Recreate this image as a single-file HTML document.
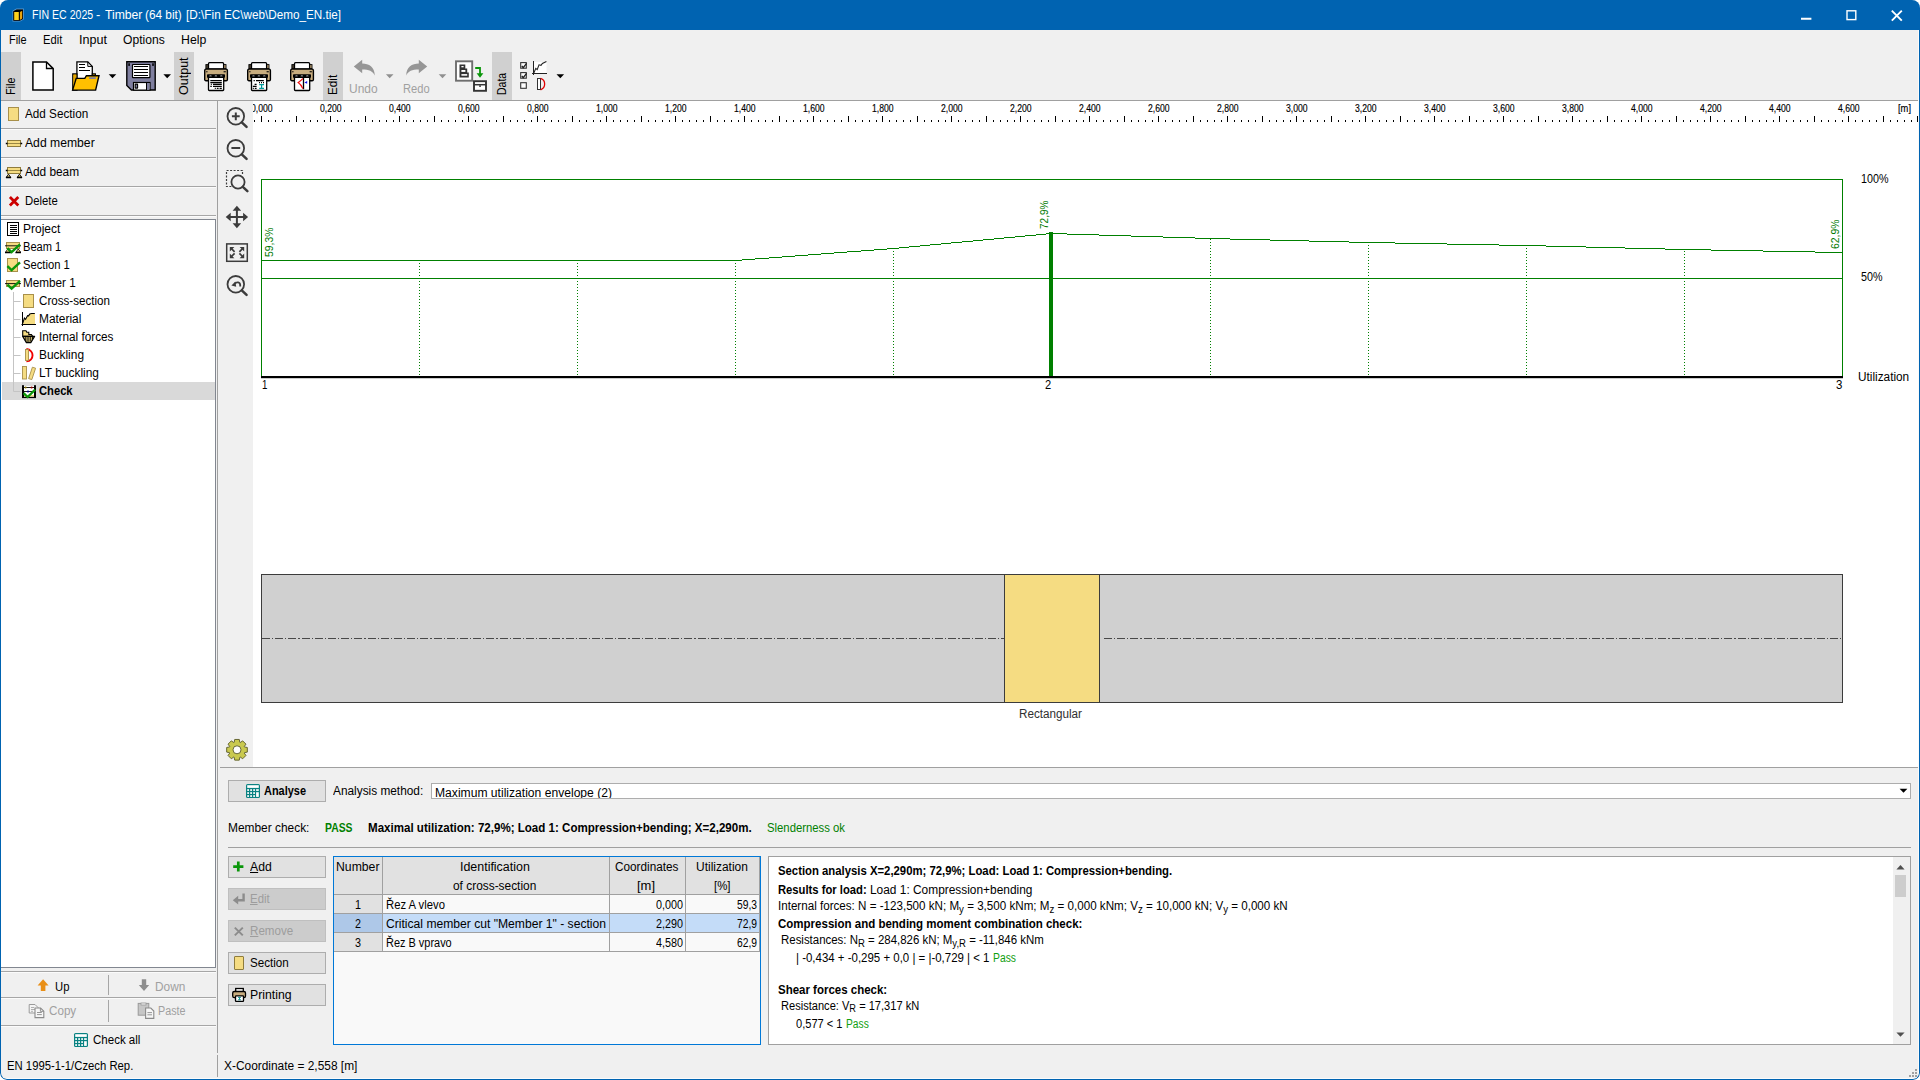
<!DOCTYPE html>
<html><head><meta charset="utf-8"><title>FIN EC 2025 - Timber</title>
<style>
html,body{margin:0;padding:0;background:#fff;}
body{width:1920px;height:1080px;overflow:hidden;font-family:"Liberation Sans",sans-serif;font-size:12px;}
#app{position:relative;width:1920px;height:1080px;overflow:hidden;background:#f0f0f0;border-radius:8px 8px 7px 7px;}
.t{position:absolute;white-space:nowrap;transform-origin:0 50%;display:inline-block;}
.b{position:absolute;box-sizing:border-box;}
svg{position:absolute;left:0;top:0;overflow:visible;}
.btn{position:absolute;box-sizing:border-box;background:#e1e1e1;border:1px solid #adadad;}
sub.s{font-size:10px;vertical-align:baseline;position:relative;top:2.6px;line-height:0;}

</style></head><body>
<div id="app">
<!-- p_head -->
<div class="b" style="left:0;top:0;width:1920px;height:30px;background:#0063b1;"></div><div class="b" style="left:0;top:30px;width:1920px;height:1050px;border:1px solid #0063b1;border-top:none;border-radius:0 0 7px 7px;z-index:50;"></div><div class="b" style="left:1918px;top:30px;width:1px;height:1044px;background:#fbfbfb;z-index:49;"></div><div class="b" style="left:6px;top:1078px;width:1908px;height:1px;background:#fbfbfb;z-index:49;"></div><span class="t" style="left:31.50px;top:7.33px;font-size:12px;line-height:16.00px;color:#fff;transform:scaleX(0.8822);">FIN EC 2025</span><span class="t" style="left:96.30px;top:7.33px;font-size:12px;line-height:16.00px;color:#fff;transform:scaleX(1.0750);">-</span><span class="t" style="left:104.50px;top:7.33px;font-size:12px;line-height:16.00px;color:#fff;transform:scaleX(1.0138);">Timber</span><span class="t" style="left:145.30px;top:7.33px;font-size:12px;line-height:16.00px;color:#fff;transform:scaleX(0.9850);">(64 bit)</span><span class="t" style="left:185.70px;top:7.33px;font-size:12px;line-height:16.00px;color:#fff;transform:scaleX(0.9818);">[D:\Fin</span><span class="t" style="left:224.30px;top:7.33px;font-size:12px;line-height:16.00px;color:#fff;transform:scaleX(0.9746);">EC\web\Demo_EN.tie]</span><span class="t" style="left:9.40px;top:31.83px;font-size:12px;line-height:16.00px;color:#000;transform:scaleX(0.9099);">File</span><span class="t" style="left:43.30px;top:31.83px;font-size:12px;line-height:16.00px;color:#000;transform:scaleX(0.9329);">Edit</span><span class="t" style="left:79.00px;top:31.83px;font-size:12px;line-height:16.00px;color:#000;transform:scaleX(1.0486);">Input</span><span class="t" style="left:123.30px;top:31.83px;font-size:12px;line-height:16.00px;color:#000;transform:scaleX(1.0082);">Options</span><span class="t" style="left:181.00px;top:31.83px;font-size:12px;line-height:16.00px;color:#000;transform:scaleX(1.0248);">Help</span><div class="b" style="left:1px;top:52px;width:20px;height:48px;background:#d0d0d0;"></div><div class="b" style="left:14.7px;top:95.2px;width:0;height:0;transform-origin:0 0;transform:rotate(-90deg);"><span class="t" style="left:0.00px;top:-11.97px;font-size:12px;line-height:16.00px;color:#000;transform:scaleX(0.8995);">File</span></div><div class="b" style="left:174px;top:52px;width:20px;height:48px;background:#d0d0d0;"></div><div class="b" style="left:187.7px;top:95.2px;width:0;height:0;transform-origin:0 0;transform:rotate(-90deg);"><span class="t" style="left:0.00px;top:-11.97px;font-size:12px;line-height:16.00px;color:#000;transform:scaleX(1.0435);">Output</span></div><div class="b" style="left:323px;top:52px;width:20px;height:48px;background:#d0d0d0;"></div><div class="b" style="left:336.7px;top:95.2px;width:0;height:0;transform-origin:0 0;transform:rotate(-90deg);"><span class="t" style="left:0.00px;top:-11.97px;font-size:12px;line-height:16.00px;color:#000;transform:scaleX(0.9764);">Edit</span></div><div class="b" style="left:492px;top:52px;width:20px;height:48px;background:#d0d0d0;"></div><div class="b" style="left:505.7px;top:95.2px;width:0;height:0;transform-origin:0 0;transform:rotate(-90deg);"><span class="t" style="left:0.00px;top:-11.97px;font-size:12px;line-height:16.00px;color:#000;transform:scaleX(0.8754);">Data</span></div><div class="b" style="left:1px;top:100px;width:1917px;height:1px;background:#a0a0a0;"></div><svg width="1920" height="110" viewBox="0 0 1920 110"><g><path d="M13.3,11.2 L16.6,9.4 H23 V19 L19.8,20.8 H13.3Z" fill="#000" stroke="#9fc4e8" stroke-opacity=".55" stroke-width="1.6"/><path d="M13.3,11.2 L16.6,9.4 H23 V19 L19.8,20.8 H13.3Z" fill="#000"/><rect x="14.2" y="12" width="4.6" height="8" fill="#ffd21c"/><path d="M19.9,12 L22.2,10.8 V18.6 L19.9,19.9Z" fill="#e9a30e"/></g><path d="M1801,18.8 H1811.4" stroke="#fff" stroke-width="2"/><rect x="1847" y="10.8" width="8.8" height="8.8" fill="none" stroke="#fff" stroke-width="1.4"/><path d="M1891.8,10.6 L1901.8,20.6 M1901.8,10.6 L1891.8,20.6" stroke="#fff" stroke-width="1.9"/><path d="M32.9,61.9 H46.5 L53.2,68.6 V90.1 H32.9Z" fill="#fff" stroke="#000" stroke-width="1.5" stroke-linejoin="miter"/><path d="M46.5,62 V68.5 H53" fill="none" stroke="#000" stroke-width="1.3"/><path d="M76.9,61.8 H87.8 L92.3,66.4 V80 H76.9Z" fill="#fff" stroke="#000" stroke-width="1.3"/><path d="M87.8,61.8 V66.4 H92.3" fill="none" stroke="#000" stroke-width="1"/><path d="M79,64.5 H85 M79,67.5 H85 M79,70.5 H90" stroke="#000" stroke-width="1.1" shape-rendering="crispEdges"/><path d="M72.8,74 H76.9 V90 H72.8Z" fill="#ffc000" stroke="#000" stroke-width="1.3"/><path d="M73.4,89.4 L76.3,79 V74.6 H73.4Z" fill="#e2a400"/><path d="M92.3,73.9 H95.4 V76 H92.3Z" fill="#ffc000" stroke="#000" stroke-width="1.1"/><path d="M72.6,90.1 L76.2,78.4 H84.8 L86.4,75.7 H99 L95.6,90.1Z" fill="#ffc000" stroke="#000" stroke-width="1.4" stroke-linejoin="miter"/><rect x="89.2" y="77.2" width="6.6" height="1.8" fill="#7f7f9f"/><path d="M108.7,74.2 H116.3 L112.5,78.3Z" fill="#000"/><path d="M163.39999999999998,74.2 H171.0 L167.2,78.3Z" fill="#000"/><path d="M385.9,74.2 H393.5 L389.7,78.3Z" fill="#909090"/><path d="M438.7,74.2 H446.3 L442.5,78.3Z" fill="#909090"/><path d="M556.5,74.2 H564.0999999999999 L560.3,78.3Z" fill="#000"/><path d="M126.8,61.8 H155.2 V90 H131.4 L126.8,85.5Z" fill="#7f7f9f" stroke="#000" stroke-width="1.4" stroke-linejoin="miter"/><rect x="132.5" y="64.5" width="17.4" height="13.2" rx="0.6" fill="#fff" stroke="#000" stroke-width="1.2"/><path d="M134,66.5 H148 M134,69.5 H148 M134,72.5 H148 M134,75.5 H148" stroke="#000" stroke-width="1" shape-rendering="crispEdges"/><rect x="128.3" y="63.3" width="1.6" height="2.6" fill="#000"/><rect x="152.2" y="63.3" width="1.6" height="2.6" fill="#000"/><rect x="133.5" y="82.5" width="16.5" height="7.6" fill="#fff" stroke="#000" stroke-width="1.2"/><rect x="147" y="83" width="2.5" height="6.6" fill="#7f7f9f"/><path d="M146.5,82.5 V90" stroke="#000" stroke-width="1"/><rect x="135.2" y="84.1" width="2.4" height="4" rx="0.3" fill="#7f7f9f" stroke="#000" stroke-width="1.1"/><g transform="translate(204,62)"><rect x="1.9" y="2.6" width="2.6" height="4" fill="#4a4030" stroke="#000" stroke-width="0.9"/><rect x="19.6" y="2.6" width="2.4" height="4" fill="#c8ad7f" stroke="#000" stroke-width="0.9"/><rect x="4.5" y="0.7" width="15.1" height="6.2" rx="1" fill="#fff" stroke="#000" stroke-width="1.3"/><rect x="0.7" y="7.1" width="22.7" height="11.6" rx="1.3" fill="#c8ad7f" stroke="#000" stroke-width="1.4"/><rect x="2.2" y="9.2" width="1.3" height="1.1" fill="#000"/><rect x="19.6" y="9.2" width="2.2" height="1.1" fill="#000"/><rect x="3" y="12.3" width="18" height="3.6" rx="0.8" fill="#000"/><path d="M5.2,14.6 a1.3,1.3 0 0 1 2.6,0 M10.6,14.6 a1.3,1.3 0 0 1 2.6,0 M16,14.6 a1.3,1.3 0 0 1 2.6,0" fill="#aaa"/><rect x="4.5" y="15.3" width="15.2" height="13.2" rx="0.8" fill="#fff" stroke="#000" stroke-width="1.3"/><path d="M6.3,18.5 H17.8 M6.3,20.5 H17.8 M6.8,22.4 H7.8 M9,22.4 H17.8 M6.3,24.4 H7.8 M9,24.4 H17.8 M10.8,26.4 H11.8 M12.8,26.4 H14.6 M15.6,26.4 H17.8" stroke="#000" stroke-width="1.25" fill="none"/></g><g transform="translate(247,62)"><rect x="1.9" y="2.6" width="2.6" height="4" fill="#4a4030" stroke="#000" stroke-width="0.9"/><rect x="19.6" y="2.6" width="2.4" height="4" fill="#c8ad7f" stroke="#000" stroke-width="0.9"/><rect x="4.5" y="0.7" width="15.1" height="6.2" rx="1" fill="#fff" stroke="#000" stroke-width="1.3"/><rect x="0.7" y="7.1" width="22.7" height="11.6" rx="1.3" fill="#c8ad7f" stroke="#000" stroke-width="1.4"/><rect x="2.2" y="9.2" width="1.3" height="1.1" fill="#000"/><rect x="19.6" y="9.2" width="2.2" height="1.1" fill="#000"/><rect x="3" y="12.3" width="18" height="3.6" rx="0.8" fill="#000"/><path d="M5.2,14.6 a1.3,1.3 0 0 1 2.6,0 M10.6,14.6 a1.3,1.3 0 0 1 2.6,0 M16,14.6 a1.3,1.3 0 0 1 2.6,0" fill="#aaa"/><rect x="4.5" y="15.3" width="15.2" height="13.2" rx="0.8" fill="#fff" stroke="#000" stroke-width="1.3"/><path d="M6.6,18.5 H7.8 M9,18.5 H16.8 M12,20.5 H13 M14,20.5 H15 M16,20.5 H17 M7.6,22.4 H9.6 M5.8,24.4 H9.6 M5.8,26.4 H6.8 M7.8,26.4 H9.6" stroke="#000" stroke-width="1.25" fill="none"/><path d="M12.2,22.7 H17 M14.6,22.7 V26.4 M12.2,26.4 H17" stroke="#009a9a" stroke-width="1.2" fill="none"/></g><g transform="translate(290,62)"><rect x="1.9" y="2.6" width="2.6" height="4" fill="#4a4030" stroke="#000" stroke-width="0.9"/><rect x="19.6" y="2.6" width="2.4" height="4" fill="#c8ad7f" stroke="#000" stroke-width="0.9"/><rect x="4.5" y="0.7" width="15.1" height="6.2" rx="1" fill="#fff" stroke="#000" stroke-width="1.3"/><rect x="0.7" y="7.1" width="22.7" height="11.6" rx="1.3" fill="#c8ad7f" stroke="#000" stroke-width="1.4"/><rect x="2.2" y="9.2" width="1.3" height="1.1" fill="#000"/><rect x="19.6" y="9.2" width="2.2" height="1.1" fill="#000"/><rect x="3" y="12.3" width="18" height="3.6" rx="0.8" fill="#000"/><path d="M5.2,14.6 a1.3,1.3 0 0 1 2.6,0 M10.6,14.6 a1.3,1.3 0 0 1 2.6,0 M16,14.6 a1.3,1.3 0 0 1 2.6,0" fill="#aaa"/><rect x="4.5" y="15.3" width="15.2" height="13.2" rx="0.8" fill="#fff" stroke="#000" stroke-width="1.3"/><path d="M13.5,16 V27.2" stroke="#000" stroke-width="1.3"/><path d="M12.8,16.6 C12,18.2 10,19.2 8.2,20.4 C10,21.6 11.6,23.2 12.8,26.6" stroke="#f01010" stroke-width="1.2" fill="none"/><path d="M14.4,20.4 L17.2,19 V21.8Z" fill="#1010f0"/></g><path d="M353.8,66.5 L362.2,59.8 V63.6 C369,63.6 374.6,67 374.8,75.6 C372.8,71.2 369,69.6 362.2,69.6 V73.2Z" fill="#969696"/><path d="M427.2,66.5 L418.8,59.8 V63.6 C412,63.6 406.4,67 406.2,75.6 C408.2,71.2 412,69.6 418.8,69.6 V73.2Z" fill="#969696"/><rect x="456" y="61.3" width="16.2" height="19.4" fill="#fff" stroke="#6e6e6e" stroke-width="1.9"/><path d="M459.5,64.4 H465.3 V68.4 H467.2 V72.4 H468.8 V77.6 H459.5Z" fill="#333"/><rect x="461.4" y="66" width="2.2" height="1.3" fill="#fff"/><rect x="461.4" y="70" width="4" height="1.9" fill="#fff"/><rect x="461.4" y="74.1" width="5.8" height="1.6" fill="#fff"/><path d="M475.2,68 H480 V75" fill="none" stroke="#0a960a" stroke-width="1.8"/><path d="M476.6,73.2 H483.4 L480,77.8Z" fill="#0a960a"/><rect x="474" y="81.2" width="12" height="9.6" fill="#fff" stroke="#333" stroke-width="1.9"/><path d="M474,84.7 H486" stroke="#333" stroke-width="1.5"/><rect x="479.2" y="85.3" width="1.7" height="1.6" fill="#333"/><rect x="520.7" y="62.6" width="5.6" height="5.6" fill="#fff" stroke="#333" stroke-width="1.1"/><path d="M521.8,66.0 L523.2,67.6 L526.6,63.4" stroke="#222" stroke-width="1.35" fill="none"/><rect x="520.7" y="72.6" width="5.6" height="5.6" fill="#fff" stroke="#333" stroke-width="1.1"/><path d="M521.8,76.0 L523.2,77.6 L526.6,73.39999999999999" stroke="#222" stroke-width="1.35" fill="none"/><rect x="520.7" y="82.7" width="5.6" height="5.6" fill="#fff" stroke="#333" stroke-width="1.1"/><rect x="534" y="62" width="12.5" height="11" fill="#fff"/><path d="M533.5,60.6 V75 M532,73.5 H547" stroke="#222" stroke-width="1" fill="none" shape-rendering="crispEdges"/><path d="M533.5,73.8 L535.8,68.4 L537.2,69.6 L539,64.8 L541,65.4 L542.4,63.4 L546.4,61.6" stroke="#222" stroke-width="1.1" fill="none"/><rect x="537.5" y="78.5" width="3" height="11" fill="#fff" stroke="#333" stroke-width="1" shape-rendering="crispEdges"/><path d="M540.6,78.4 C546,80.2 546,88 540.6,89.8" stroke="#e00000" stroke-width="1.3" fill="none"/></svg><span class="t" style="left:349.40px;top:80.83px;font-size:12px;line-height:16.00px;color:#a0a0a0;transform:scaleX(0.9969);">Undo</span><span class="t" style="left:403.40px;top:80.83px;font-size:12px;line-height:16.00px;color:#a0a0a0;transform:scaleX(0.9272);">Redo</span>
<!-- p_left -->
<div class="b" style="left:217px;top:101px;width:1px;height:952px;background:#a0a0a0;"></div><div class="b" style="left:1px;top:128px;width:215px;height:1px;background:#a6a6a6;"></div><div class="b" style="left:1px;top:129px;width:215px;height:1px;background:#fbfbfb;"></div><div class="b" style="left:1px;top:157px;width:215px;height:1px;background:#a6a6a6;"></div><div class="b" style="left:1px;top:158px;width:215px;height:1px;background:#fbfbfb;"></div><div class="b" style="left:1px;top:186px;width:215px;height:1px;background:#a6a6a6;"></div><div class="b" style="left:1px;top:187px;width:215px;height:1px;background:#fbfbfb;"></div><div class="b" style="left:1px;top:215px;width:215px;height:1px;background:#a6a6a6;"></div><div class="b" style="left:1px;top:216px;width:215px;height:1px;background:#fbfbfb;"></div><span class="t" style="left:25.30px;top:106.03px;font-size:12px;line-height:16.00px;color:#000;transform:scaleX(0.9765);">Add Section</span><span class="t" style="left:25.30px;top:135.03px;font-size:12px;line-height:16.00px;color:#000;transform:scaleX(1.0145);">Add member</span><span class="t" style="left:25.30px;top:164.03px;font-size:12px;line-height:16.00px;color:#000;transform:scaleX(0.9890);">Add beam</span><span class="t" style="left:25.30px;top:193.03px;font-size:12px;line-height:16.00px;color:#000;transform:scaleX(0.9427);">Delete</span><div class="b" style="left:1px;top:219px;width:215px;height:749px;background:#fff;border:1px solid #828790;border-left:none;"></div><div class="b" style="left:2px;top:382px;width:213px;height:18px;background:#d9d9d9;"></div><span class="t" style="left:22.90px;top:220.63px;font-size:12px;line-height:16.00px;color:#000;transform:scaleX(0.9984);">Project</span><span class="t" style="left:22.90px;top:238.63px;font-size:12px;line-height:16.00px;color:#000;transform:scaleX(0.9260);">Beam 1</span><span class="t" style="left:22.90px;top:256.63px;font-size:12px;line-height:16.00px;color:#000;transform:scaleX(0.9351);">Section 1</span><span class="t" style="left:22.90px;top:274.63px;font-size:12px;line-height:16.00px;color:#000;transform:scaleX(0.9772);">Member 1</span><span class="t" style="left:39.40px;top:292.63px;font-size:12px;line-height:16.00px;color:#000;transform:scaleX(0.9665);">Cross-section</span><span class="t" style="left:39.40px;top:310.63px;font-size:12px;line-height:16.00px;color:#000;transform:scaleX(0.9909);">Material</span><span class="t" style="left:39.40px;top:328.63px;font-size:12px;line-height:16.00px;color:#000;transform:scaleX(0.9797);">Internal forces</span><span class="t" style="left:39.40px;top:346.63px;font-size:12px;line-height:16.00px;color:#000;transform:scaleX(0.9921);">Buckling</span><span class="t" style="left:39.40px;top:364.63px;font-size:12px;line-height:16.00px;color:#000;transform:scaleX(0.9956);">LT buckling</span><span class="t" style="left:39.40px;top:382.63px;font-size:12px;line-height:16.00px;font-weight:bold;color:#000;transform:scaleX(0.9325);">Check</span><svg width="220" height="1080" viewBox="0 0 220 1080"><rect x="8.5" y="107.5" width="10" height="13" fill="#f5dc82" stroke="#a8904a" stroke-width="1"/><rect x="7.5" y="140.5" width="13" height="6" fill="#f5dc82" stroke="#8f7c3c" stroke-width="1"/><path d="M8,143.5 H20" stroke="#8f7c3c" stroke-width="0.9"/><path d="M5.8,143.5 H7.6 M20.4,143.5 H22.2" stroke="#000" stroke-width="1.3"/><rect x="7.5" y="167.5" width="13" height="6" fill="#f5dc82" stroke="#8f7c3c" stroke-width="1"/><path d="M8,170.5 H20" stroke="#8f7c3c" stroke-width="0.9"/><path d="M5.8,170.5 H7.6 M20.4,170.5 H22.2" stroke="#000" stroke-width="1.3"/><path d="M8.5,174.2 L6.4,177.2 H10.6Z M19.5,174.2 L17.4,177.2 H21.6Z" fill="#f5dc82" stroke="#000" stroke-width="0.9" stroke-linejoin="round"/><path d="M5.9,177.5 H11.1 M16.9,177.5 H22.1" stroke="#000" stroke-width="1.4"/><path d="M9.9,197 L18.3,205.4 M18.3,197 L9.9,205.4" stroke="#cc0000" stroke-width="2.8"/><rect x="7.5" y="222.5" width="11" height="13" fill="#fff" stroke="#000" stroke-width="1"/><path d="M10,225.5 H17 M10,227.5 H17 M10,229.5 H17 M10,231.5 H17 M10,233.5 H17" stroke="#000" stroke-width="1" shape-rendering="crispEdges"/><rect x="6.5" y="242.5" width="13" height="6" fill="#f5dc82" stroke="#a8904a" stroke-width="1"/><path d="M5,245.8 H21" stroke="#000" stroke-width="0.9"/><path d="M7.8,249 L5.6,252 H10.2Z M18.2,249 L16,252 H20.6Z" fill="#f5dc82" stroke="#000" stroke-width="0.8"/><path d="M5,252.6 H11 M15.4,252.6 H21" stroke="#000" stroke-width="1.2"/><path d="M7.4,248.2 L11.600000000000001,252.2 L20.0,244.39999999999998" fill="none" stroke="#0a960a" stroke-width="2.4" stroke-linejoin="miter"/><rect x="7.5" y="258.5" width="10" height="13" fill="#f5dc82" stroke="#a8904a" stroke-width="1"/><path d="M7.4,266.2 L11.600000000000001,270.2 L20.0,262.4" fill="none" stroke="#0a960a" stroke-width="2.4" stroke-linejoin="miter"/><rect x="6.5" y="280.5" width="13" height="6" fill="#f5dc82" stroke="#a8904a" stroke-width="1"/><path d="M5,283.6 H21" stroke="#000" stroke-width="0.9"/><path d="M7.4,284.6 L11.600000000000001,288.6 L20.0,280.8" fill="none" stroke="#0a960a" stroke-width="2.4" stroke-linejoin="miter"/><path d="M13.5,292 V391.5 M13.5,301.5 H20.5 M13.5,319.5 H20.5 M13.5,337.5 H20.5 M13.5,355.5 H20.5 M13.5,373.5 H20.5 M13.5,391.5 H20.5" stroke="#c4c4c4" stroke-width="1" fill="none"/><rect x="23.5" y="294.5" width="10" height="13" fill="#f5dc82" stroke="#a8904a" stroke-width="1"/><path d="M22.8,323.6 L24.4,318 L25.6,319.4 L27.6,315.6 L28.6,315.8 L29.8,314 L31.6,313.5 H35 V324.5 H22.8Z" fill="#f5dc82"/><path d="M22.5,312 V326 M21.5,324.5 H36" stroke="#000" stroke-width="1" fill="none"/><path d="M22.8,323.2 L24.4,318 L25.6,319.4 L27.6,315.6 L28.6,315.8 L29.8,314 L31.6,313.5 H34.8" stroke="#000" stroke-width="1.1" fill="none"/><path d="M22.7,330.7 H26 L26.8,332.3 H28.8 V334.5 H31.4 L32.6,336.2 H22.7Z" fill="#f5dc82" stroke="#000" stroke-width="1.1"/><path d="M22.7,336.4 H34.6 L30.8,342.6 H26.4Z" fill="#f5dc82" stroke="#000" stroke-width="1.2" stroke-linejoin="round"/><path d="M25.3,337 V340.4 M27.1,337 V342.4 M28.9,337 V342.4 M30.7,337 V341.6 M32.5,337 V339" stroke="#000" stroke-width="0.9"/><path d="M26.4,349 C34.6,350 34.6,360.8 26.4,361.4" stroke="#f00000" stroke-width="1.9" fill="none"/><rect x="25.5" y="349.5" width="3" height="11" fill="#f5dc82" stroke="#a8904a" stroke-width="0.9"/><rect x="22.5" y="366.5" width="4" height="12.5" fill="#f5dc82" stroke="#a8904a" stroke-width="0.9"/><path d="M28.6,378.6 L32.4,367.2 L35.6,368.2 L31.8,379.6Z" fill="#f5dc82" stroke="#a8904a" stroke-width="0.9"/><rect x="23.5" y="386" width="11" height="11" fill="#fff"/><path d="M23,387.5 H35 M23,391.5 H35" stroke="#000" stroke-width="0.9"/><rect x="22" y="385.2" width="2" height="12.8" fill="#000"/><rect x="34" y="385.2" width="2" height="12.8" fill="#000"/><rect x="22" y="396.6" width="14" height="1.5" fill="#000"/><rect x="24" y="395" width="10" height="1.5" fill="#f5dc82"/><circle cx="25.6" cy="387.5" r="1.1" fill="#807000"/><circle cx="31.6" cy="387.5" r="1.1" fill="#900000"/><circle cx="28" cy="391.5" r="1.1" fill="#000080"/><path d="M23.6,393.2 L27.6,397 L35.2,389.6" fill="none" stroke="#0a960a" stroke-width="2.3"/><path d="M1,971.5 H216" stroke="#a6a6a6" stroke-width="1"/><path d="M1,972.5 H216" stroke="#fbfbfb" stroke-width="1"/><path d="M1,997.5 H216" stroke="#a6a6a6" stroke-width="1"/><path d="M1,998.5 H216" stroke="#fbfbfb" stroke-width="1"/><path d="M1,1025.5 H216" stroke="#a6a6a6" stroke-width="1"/><path d="M1,1026.5 H216" stroke="#fbfbfb" stroke-width="1"/><path d="M108.5,975 V995 M108.5,1000 V1022" stroke="#a6a6a6" stroke-width="1"/><path d="M43.1,979.2 L48.6,985.4 H45.4 V991 H40.8 V985.4 H37.6Z" fill="#e98f17"/><path d="M144,991 L138.8,985 H141.8 V979.2 H146.2 V985 H149.2Z" fill="#8e8e8e"/><path d="M29.2,1004.5 H35 L38,1007.5 V1013 H29.2Z" fill="#f4f4f4" stroke="#9a9a9a" stroke-width="1"/><path d="M31,1007.5 H34 M31,1009.5 H36 M31,1011.3 H33" stroke="#a8a8a8" stroke-width="0.9"/><path d="M35,1008 H40.6 L43.8,1011.2 V1017.6 H35Z" fill="#f6f6f6" stroke="#8a8a8a" stroke-width="1.1"/><path d="M40.4,1008 V1011.4 H43.8" fill="none" stroke="#8a8a8a" stroke-width="0.9"/><path d="M37,1012.5 H41.8 M37,1014.6 H41.8" stroke="#8a8a8a" stroke-width="0.9"/><rect x="138.2" y="1003.4" width="10.6" height="11.8" fill="#c6c6c6" stroke="#9a9a9a" stroke-width="1"/><rect x="141" y="1003" width="5" height="2" fill="#f0f0f0" stroke="#9a9a9a" stroke-width="0.8"/><path d="M145.6,1008 H150.8 L153.8,1011 V1018.4 H145.6Z" fill="#f6f6f6" stroke="#8a8a8a" stroke-width="1.1"/><path d="M147.4,1012.6 H152 M147.4,1014.8 H152" stroke="#8a8a8a" stroke-width="0.9"/><g transform="translate(74,1033)"><rect x="0" y="0" width="14" height="14" rx="1.6" fill="#0a8282"/><rect x="1.2" y="1.2" width="11.6" height="2.7" fill="#fff"/><rect x="1.2" y="5.2" width="1.8" height="1.7" fill="#fff"/><rect x="1.2" y="8.2" width="1.8" height="1.7" fill="#fff"/><rect x="1.2" y="11.2" width="1.8" height="1.7" fill="#fff"/><rect x="4.2" y="5.2" width="1.8" height="1.7" fill="#fff"/><rect x="4.2" y="8.2" width="1.8" height="1.7" fill="#fff"/><rect x="4.2" y="11.2" width="1.8" height="1.7" fill="#fff"/><rect x="7.2" y="5.2" width="1.8" height="1.7" fill="#fff"/><rect x="7.2" y="8.2" width="1.8" height="1.7" fill="#fff"/><rect x="7.2" y="11.2" width="1.8" height="1.7" fill="#fff"/><rect x="10.1" y="5.2" width="2.7" height="1.7" fill="#fff"/><rect x="10.1" y="8.2" width="2.7" height="4.7" fill="#fff"/></g></svg><span class="t" style="left:54.50px;top:978.63px;font-size:12px;line-height:16.00px;color:#000;transform:scaleX(0.9385);">Up</span><span class="t" style="left:155.30px;top:978.63px;font-size:12px;line-height:16.00px;color:#a0a0a0;transform:scaleX(0.9874);">Down</span><span class="t" style="left:48.50px;top:1003.13px;font-size:12px;line-height:16.00px;color:#a0a0a0;transform:scaleX(0.9709);">Copy</span><span class="t" style="left:157.50px;top:1003.13px;font-size:12px;line-height:16.00px;color:#a0a0a0;transform:scaleX(0.8961);">Paste</span><span class="t" style="left:92.50px;top:1031.63px;font-size:12px;line-height:16.00px;color:#000;transform:scaleX(0.9603);">Check all</span><span class="t" style="left:7.20px;top:1057.63px;font-size:12px;line-height:16.00px;color:#000;transform:scaleX(0.9420);">EN 1995-1-1/Czech Rep.</span><span class="t" style="left:224.00px;top:1057.63px;font-size:12px;line-height:16.00px;color:#000;transform:scaleX(0.9924);">X-Coordinate = 2,558 [m]</span><div class="b" style="left:217px;top:1055px;width:1px;height:22px;background:#a0a0a0;"></div>
<!-- p_canvas -->
<div class="b" style="left:253px;top:101px;width:1665px;height:666px;background:#fff;"></div><div class="b" style="left:220px;top:767px;width:1698px;height:1px;background:#a0a0a0;"></div><svg width="1920" height="780" viewBox="0 0 1920 780" shape-rendering="crispEdges"><path d="M261.5,116V122M296.5,116V122M330.5,116V122M365.5,116V122M399.5,116V122M434.5,116V122M468.5,116V122M503.5,116V122M537.5,116V122M572.5,116V122M606.5,116V122M641.5,116V122M675.5,116V122M710.5,116V122M744.5,116V122M779.5,116V122M813.5,116V122M848.5,116V122M882.5,116V122M917.5,116V122M951.5,116V122M986.5,116V122M1020.5,116V122M1055.5,116V122M1089.5,116V122M1124.5,116V122M1158.5,116V122M1193.5,116V122M1227.5,116V122M1262.5,116V122M1296.5,116V122M1331.5,116V122M1365.5,116V122M1400.5,116V122M1434.5,116V122M1469.5,116V122M1503.5,116V122M1538.5,116V122M1572.5,116V122M1607.5,116V122M1641.5,116V122M1676.5,116V122M1710.5,116V122M1745.5,116V122M1779.5,116V122M1814.5,116V122M1848.5,116V122M1883.5,116V122M1917.5,116V122M254.5,120V122M268.5,120V122M275.5,120V122M282.5,120V122M289.5,120V122M303.5,120V122M310.5,120V122M317.5,120V122M324.5,120V122M337.5,120V122M344.5,120V122M351.5,120V122M358.5,120V122M372.5,120V122M379.5,120V122M386.5,120V122M393.5,120V122M406.5,120V122M413.5,120V122M420.5,120V122M427.5,120V122M441.5,120V122M448.5,120V122M455.5,120V122M462.5,120V122M475.5,120V122M482.5,120V122M489.5,120V122M496.5,120V122M510.5,120V122M517.5,120V122M524.5,120V122M531.5,120V122M544.5,120V122M551.5,120V122M558.5,120V122M565.5,120V122M579.5,120V122M586.5,120V122M593.5,120V122M600.5,120V122M613.5,120V122M620.5,120V122M627.5,120V122M634.5,120V122M648.5,120V122M655.5,120V122M662.5,120V122M669.5,120V122M682.5,120V122M689.5,120V122M696.5,120V122M703.5,120V122M717.5,120V122M724.5,120V122M731.5,120V122M738.5,120V122M751.5,120V122M758.5,120V122M765.5,120V122M772.5,120V122M786.5,120V122M793.5,120V122M800.5,120V122M807.5,120V122M820.5,120V122M827.5,120V122M834.5,120V122M841.5,120V122M855.5,120V122M862.5,120V122M869.5,120V122M876.5,120V122M889.5,120V122M896.5,120V122M903.5,120V122M910.5,120V122M924.5,120V122M931.5,120V122M938.5,120V122M945.5,120V122M958.5,120V122M965.5,120V122M972.5,120V122M979.5,120V122M993.5,120V122M1000.5,120V122M1007.5,120V122M1014.5,120V122M1027.5,120V122M1034.5,120V122M1041.5,120V122M1048.5,120V122M1062.5,120V122M1069.5,120V122M1076.5,120V122M1083.5,120V122M1096.5,120V122M1103.5,120V122M1110.5,120V122M1117.5,120V122M1131.5,120V122M1138.5,120V122M1145.5,120V122M1152.5,120V122M1165.5,120V122M1172.5,120V122M1179.5,120V122M1186.5,120V122M1200.5,120V122M1207.5,120V122M1214.5,120V122M1221.5,120V122M1234.5,120V122M1241.5,120V122M1248.5,120V122M1255.5,120V122M1269.5,120V122M1276.5,120V122M1283.5,120V122M1290.5,120V122M1303.5,120V122M1310.5,120V122M1317.5,120V122M1324.5,120V122M1338.5,120V122M1345.5,120V122M1352.5,120V122M1359.5,120V122M1372.5,120V122M1379.5,120V122M1386.5,120V122M1393.5,120V122M1407.5,120V122M1414.5,120V122M1421.5,120V122M1428.5,120V122M1441.5,120V122M1448.5,120V122M1455.5,120V122M1462.5,120V122M1476.5,120V122M1483.5,120V122M1490.5,120V122M1497.5,120V122M1510.5,120V122M1517.5,120V122M1524.5,120V122M1531.5,120V122M1545.5,120V122M1552.5,120V122M1559.5,120V122M1566.5,120V122M1579.5,120V122M1586.5,120V122M1593.5,120V122M1600.5,120V122M1614.5,120V122M1621.5,120V122M1628.5,120V122M1635.5,120V122M1648.5,120V122M1655.5,120V122M1662.5,120V122M1669.5,120V122M1683.5,120V122M1690.5,120V122M1697.5,120V122M1704.5,120V122M1717.5,120V122M1724.5,120V122M1731.5,120V122M1738.5,120V122M1752.5,120V122M1759.5,120V122M1766.5,120V122M1773.5,120V122M1786.5,120V122M1793.5,120V122M1800.5,120V122M1807.5,120V122M1821.5,120V122M1828.5,120V122M1835.5,120V122M1842.5,120V122M1855.5,120V122M1862.5,120V122M1869.5,120V122M1876.5,120V122M1890.5,120V122M1897.5,120V122M1904.5,120V122M1911.5,120V122" stroke="#000" stroke-width="1"/><path d="M261.5,377.1 V179.5 H1842.5 V377.1" fill="none" stroke="#008000" stroke-width="1"/><path d="M261.5,278.5 H1842.5" stroke="#008000" stroke-width="1"/></svg><svg width="1920" height="780" viewBox="0 0 1920 780"><path d="M262,260.5H742M742,259.5H755M755,258.5H769M769,257.5H782M782,256.5H795M795,255.5H808M808,254.5H821M821,253.5H834M834,252.5H847M847,251.5H861M861,250.5H874M874,249.5H887M887,248.5H899M899,247.5H909M909,246.5H920M920,245.5H930M930,244.5H941M941,243.5H951M951,242.5H962M962,241.5H973M973,240.5H983M983,239.5H994M994,238.5H1004M1004,237.5H1015M1015,236.5H1025M1025,235.5H1036M1036,234.5H1046M1046,233.5H1067M1067,234.5H1099M1099,235.5H1131M1131,236.5H1163M1163,237.5H1195M1195,238.5H1230M1230,239.5H1270M1270,240.5H1309M1309,241.5H1349M1349,242.5H1395M1395,243.5H1447M1447,244.5H1499M1499,245.5H1546M1546,246.5H1586M1586,247.5H1625M1625,248.5H1665M1665,249.5H1711M1711,250.5H1763M1763,251.5H1815M1815,252.5H1842" stroke="#008000" stroke-width="1" fill="none" shape-rendering="crispEdges"/><path d="M419.5,263 V376" stroke="#008000" stroke-width="1" stroke-dasharray="1 2" shape-rendering="crispEdges"/><path d="M577.5,263 V376" stroke="#008000" stroke-width="1" stroke-dasharray="1 2" shape-rendering="crispEdges"/><path d="M735.5,263 V376" stroke="#008000" stroke-width="1" stroke-dasharray="1 2" shape-rendering="crispEdges"/><path d="M893.5,251 V376" stroke="#008000" stroke-width="1" stroke-dasharray="1 2" shape-rendering="crispEdges"/><path d="M1210.5,239 V376" stroke="#008000" stroke-width="1" stroke-dasharray="1 2" shape-rendering="crispEdges"/><path d="M1368.5,245 V376" stroke="#008000" stroke-width="1" stroke-dasharray="1 2" shape-rendering="crispEdges"/><path d="M1526.5,248 V376" stroke="#008000" stroke-width="1" stroke-dasharray="1 2" shape-rendering="crispEdges"/><path d="M1684.5,251 V376" stroke="#008000" stroke-width="1" stroke-dasharray="1 2" shape-rendering="crispEdges"/><rect x="1049" y="232" width="4" height="145" fill="#008000" shape-rendering="crispEdges"/><rect x="261" y="376" width="1582" height="2.2" fill="#000"/><rect x="261.5" y="574.5" width="1581" height="128" fill="#d0d0d0" stroke="#3c3c3c" stroke-width="1" shape-rendering="crispEdges"/><path d="M262,638.5 H1004 M1104,638.5 H1842" stroke="#484848" stroke-width="1" stroke-dasharray="8 2 1.2 2" shape-rendering="crispEdges"/><rect x="1004.5" y="574.5" width="95" height="128" fill="#f5dc82" stroke="#3c3c3c" stroke-width="1" shape-rendering="crispEdges"/><circle cx="235.8" cy="116.3" r="8.3" fill="none" stroke="#3c3c3c" stroke-width="1.8"/><path d="M241.776,122.276 L246.57600000000002,126.976" stroke="#3c3c3c" stroke-width="2.5" stroke-linecap="round"/><path d="M231.9,116.3 H239.7 M235.8,112.4 V120.2" stroke="#3c3c3c" stroke-width="2"/><circle cx="235.8" cy="148.3" r="8.3" fill="none" stroke="#3c3c3c" stroke-width="1.8"/><path d="M241.776,154.276 L246.57600000000002,158.976" stroke="#3c3c3c" stroke-width="2.5" stroke-linecap="round"/><path d="M231.4,148 H240.2" stroke="#3c3c3c" stroke-width="2"/><path d="M231.4,186.5 H226.5 V170.5 H242.5 V175" fill="none" stroke="#3c3c3c" stroke-width="1.2" stroke-dasharray="2 1.5"/><circle cx="238" cy="182" r="6.6" fill="#f0f0f0" stroke="#3c3c3c" stroke-width="1.8"/><path d="M242.8,186.8 L247.4,191.2" stroke="#3c3c3c" stroke-width="2.5" stroke-linecap="round"/><path d="M228.9,217 H244.9 M236.9,209 V225" stroke="#3c3c3c" stroke-width="2"/><path d="M225.70000000000002,217 l5,-4.3 v8.6Z M248.1,217 l-5,-4.3 v8.6Z M236.9,205.8 l-4.3,5 h8.6Z M236.9,228.2 l-4.3,-5 h8.6Z" fill="#3c3c3c"/><rect x="226.7" y="243.9" width="20.6" height="17.4" fill="none" stroke="#3c3c3c" stroke-width="1.5"/><path d="M229.8,247 l4.6,0 l-4.6,4.6Z" fill="#3c3c3c"/><path d="M231.0,248.2 l3.6,3.6" stroke="#3c3c3c" stroke-width="1.7"/><path d="M244.2,247 l-4.6,0 l4.6,4.6Z" fill="#3c3c3c"/><path d="M243.0,248.2 l-3.6,3.6" stroke="#3c3c3c" stroke-width="1.7"/><path d="M229.8,258.2 l4.6,0 l-4.6,-4.6Z" fill="#3c3c3c"/><path d="M231.0,257.0 l3.6,-3.6" stroke="#3c3c3c" stroke-width="1.7"/><path d="M244.2,258.2 l-4.6,0 l4.6,-4.6Z" fill="#3c3c3c"/><path d="M243.0,257.0 l-3.6,-3.6" stroke="#3c3c3c" stroke-width="1.7"/><circle cx="235.8" cy="284.3" r="8.3" fill="none" stroke="#3c3c3c" stroke-width="1.8"/><path d="M241.776,290.276 L246.57600000000002,294.976" stroke="#3c3c3c" stroke-width="2.5" stroke-linecap="round"/><path d="M231.4,285.4 L235.4,281.6 L236.2,286.8Z" fill="#3c3c3c"/><path d="M234.8,283.6 C236.4,281.6 240.2,281.8 240.2,285 V286.6" fill="none" stroke="#3c3c3c" stroke-width="1.8"/><path d="M247.34,747.49 L247.34,752.11 L244.49,752.62 L244.29,753.10 L245.95,755.48 L242.68,758.75 L240.30,757.09 L239.82,757.29 L239.31,760.14 L234.69,760.14 L234.18,757.29 L233.70,757.09 L231.32,758.75 L228.05,755.48 L229.71,753.10 L229.51,752.62 L226.66,752.11 L226.66,747.49 L229.51,746.98 L229.71,746.50 L228.05,744.12 L231.32,740.85 L233.70,742.51 L234.18,742.31 L234.69,739.46 L239.31,739.46 L239.82,742.31 L240.30,742.51 L242.68,740.85 L245.95,744.12 L244.29,746.50 L244.49,746.98 Z" fill="#c9c94f" stroke="#5a5a28" stroke-width="0.9"/><circle cx="237" cy="749.8" r="4" fill="#fff" stroke="#5a5a28" stroke-width="0.9"/></svg><div class="b" style="left:253px;top:101px;width:1665px;height:16px;overflow:hidden;"><span class="t" style="left:-2.40px;top:1.03px;font-size:10px;line-height:13.33px;color:#000;-webkit-text-stroke:0.15px #000;transform:scaleX(0.8629);">0,000</span></div><span class="t" style="left:319.60px;top:102.03px;font-size:10px;line-height:13.33px;color:#000;-webkit-text-stroke:0.15px #000;transform:scaleX(0.8629);">0,200</span><span class="t" style="left:388.60px;top:102.03px;font-size:10px;line-height:13.33px;color:#000;-webkit-text-stroke:0.15px #000;transform:scaleX(0.8629);">0,400</span><span class="t" style="left:457.60px;top:102.03px;font-size:10px;line-height:13.33px;color:#000;-webkit-text-stroke:0.15px #000;transform:scaleX(0.8629);">0,600</span><span class="t" style="left:526.60px;top:102.03px;font-size:10px;line-height:13.33px;color:#000;-webkit-text-stroke:0.15px #000;transform:scaleX(0.8629);">0,800</span><span class="t" style="left:595.60px;top:102.03px;font-size:10px;line-height:13.33px;color:#000;-webkit-text-stroke:0.15px #000;transform:scaleX(0.8629);">1,000</span><span class="t" style="left:664.60px;top:102.03px;font-size:10px;line-height:13.33px;color:#000;-webkit-text-stroke:0.15px #000;transform:scaleX(0.8629);">1,200</span><span class="t" style="left:733.60px;top:102.03px;font-size:10px;line-height:13.33px;color:#000;-webkit-text-stroke:0.15px #000;transform:scaleX(0.8629);">1,400</span><span class="t" style="left:802.60px;top:102.03px;font-size:10px;line-height:13.33px;color:#000;-webkit-text-stroke:0.15px #000;transform:scaleX(0.8629);">1,600</span><span class="t" style="left:871.60px;top:102.03px;font-size:10px;line-height:13.33px;color:#000;-webkit-text-stroke:0.15px #000;transform:scaleX(0.8629);">1,800</span><span class="t" style="left:940.60px;top:102.03px;font-size:10px;line-height:13.33px;color:#000;-webkit-text-stroke:0.15px #000;transform:scaleX(0.8629);">2,000</span><span class="t" style="left:1009.60px;top:102.03px;font-size:10px;line-height:13.33px;color:#000;-webkit-text-stroke:0.15px #000;transform:scaleX(0.8629);">2,200</span><span class="t" style="left:1078.60px;top:102.03px;font-size:10px;line-height:13.33px;color:#000;-webkit-text-stroke:0.15px #000;transform:scaleX(0.8629);">2,400</span><span class="t" style="left:1147.60px;top:102.03px;font-size:10px;line-height:13.33px;color:#000;-webkit-text-stroke:0.15px #000;transform:scaleX(0.8629);">2,600</span><span class="t" style="left:1216.60px;top:102.03px;font-size:10px;line-height:13.33px;color:#000;-webkit-text-stroke:0.15px #000;transform:scaleX(0.8629);">2,800</span><span class="t" style="left:1285.60px;top:102.03px;font-size:10px;line-height:13.33px;color:#000;-webkit-text-stroke:0.15px #000;transform:scaleX(0.8629);">3,000</span><span class="t" style="left:1354.60px;top:102.03px;font-size:10px;line-height:13.33px;color:#000;-webkit-text-stroke:0.15px #000;transform:scaleX(0.8629);">3,200</span><span class="t" style="left:1423.60px;top:102.03px;font-size:10px;line-height:13.33px;color:#000;-webkit-text-stroke:0.15px #000;transform:scaleX(0.8629);">3,400</span><span class="t" style="left:1492.60px;top:102.03px;font-size:10px;line-height:13.33px;color:#000;-webkit-text-stroke:0.15px #000;transform:scaleX(0.8629);">3,600</span><span class="t" style="left:1561.60px;top:102.03px;font-size:10px;line-height:13.33px;color:#000;-webkit-text-stroke:0.15px #000;transform:scaleX(0.8629);">3,800</span><span class="t" style="left:1630.60px;top:102.03px;font-size:10px;line-height:13.33px;color:#000;-webkit-text-stroke:0.15px #000;transform:scaleX(0.8629);">4,000</span><span class="t" style="left:1699.60px;top:102.03px;font-size:10px;line-height:13.33px;color:#000;-webkit-text-stroke:0.15px #000;transform:scaleX(0.8629);">4,200</span><span class="t" style="left:1768.60px;top:102.03px;font-size:10px;line-height:13.33px;color:#000;-webkit-text-stroke:0.15px #000;transform:scaleX(0.8629);">4,400</span><span class="t" style="left:1837.60px;top:102.03px;font-size:10px;line-height:13.33px;color:#000;-webkit-text-stroke:0.15px #000;transform:scaleX(0.8629);">4,600</span><span class="t" style="left:1898.00px;top:102.03px;font-size:10px;line-height:13.33px;color:#000;-webkit-text-stroke:0.15px #000;transform:scaleX(0.9359);">[m]</span><span class="t" style="left:1860.50px;top:170.83px;font-size:12px;line-height:16.00px;color:#000;transform:scaleX(0.8957);">100%</span><span class="t" style="left:1860.50px;top:269.43px;font-size:12px;line-height:16.00px;color:#000;transform:scaleX(0.8947);">50%</span><span class="t" style="left:1857.80px;top:369.03px;font-size:12px;line-height:16.00px;color:#000;transform:scaleX(0.9840);">Utilization</span><span class="t" style="left:262.00px;top:377.03px;font-size:12px;line-height:16.00px;color:#000;transform:scaleX(0.8075);">1</span><span class="t" style="left:1045.20px;top:377.03px;font-size:12px;line-height:16.00px;color:#000;transform:scaleX(0.9271);">2</span><span class="t" style="left:1835.60px;top:377.03px;font-size:12px;line-height:16.00px;color:#000;transform:scaleX(0.9570);">3</span><span class="t" style="left:1019.30px;top:706.03px;font-size:12px;line-height:16.00px;color:#303030;transform:scaleX(0.9734);">Rectangular</span><span class="t" style="left:274.2px;top:257px;font-size:11px;line-height:11px;color:#007a00;transform-origin:0 0;transform:rotate(-90deg) translate(0,-10px) scaleX(0.941);">59,3%</span><span class="t" style="left:1049.2px;top:229.2px;font-size:11px;line-height:11px;color:#007a00;transform-origin:0 0;transform:rotate(-90deg) translate(0,-10px) scaleX(0.913);">72,9%</span><span class="t" style="left:1840.0px;top:248.6px;font-size:11px;line-height:11px;color:#007a00;transform-origin:0 0;transform:rotate(-90deg) translate(0,-10px) scaleX(0.941);">62,9%</span>
<!-- p_bottom -->
<div class="btn" style="left:228px;top:780px;width:98px;height:22px;"></div><span class="t" style="left:264.00px;top:782.73px;font-size:12px;line-height:16.00px;font-weight:bold;color:#000;transform:scaleX(0.9124);">Analyse</span><span class="t" style="left:333.20px;top:782.73px;font-size:12px;line-height:16.00px;color:#000;transform:scaleX(0.9870);">Analysis method:</span><div class="b" style="left:431px;top:783px;width:1480px;height:16px;background:#fff;border:1px solid #adadad;overflow:hidden;"><span class="t" style="left:3.00px;top:1.03px;font-size:12px;line-height:16.00px;color:#000;transform:scaleX(1.0091);">Maximum utilization envelope (2)</span></div><span class="t" style="left:228.20px;top:819.63px;font-size:12px;line-height:16.00px;color:#000;transform:scaleX(0.9923);">Member check:</span><span class="t" style="left:325.20px;top:819.63px;font-size:12px;line-height:16.00px;font-weight:bold;color:#008000;transform:scaleX(0.8649);">PASS</span><span class="t" style="left:368.30px;top:819.63px;font-size:12px;line-height:16.00px;font-weight:bold;color:#000;transform:scaleX(0.9638);">Maximal utilization: 72,9%; Load 1: Compression+bending; X=2,290m.</span><span class="t" style="left:767.00px;top:819.63px;font-size:12px;line-height:16.00px;color:#008000;transform:scaleX(0.9430);">Slenderness ok</span><div class="b" style="left:228px;top:847px;width:1683px;height:1px;background:#a0a0a0;"></div><div class="btn" style="left:228px;top:856px;width:98px;height:22px;background:#e1e1e1;border-color:#adadad;"></div><span class="t" style="left:249.80px;top:859.23px;font-size:12px;line-height:16.00px;color:#000;transform:scaleX(1.0152);"><u>A</u>dd</span><div class="btn" style="left:228px;top:888px;width:98px;height:22px;background:#cccccc;border-color:#bfbfbf;"></div><span class="t" style="left:249.80px;top:891.23px;font-size:12px;line-height:16.00px;color:#9d9d9d;transform:scaleX(0.9515);"><u>E</u>dit</span><div class="btn" style="left:228px;top:920px;width:98px;height:22px;background:#cccccc;border-color:#bfbfbf;"></div><span class="t" style="left:249.80px;top:923.23px;font-size:12px;line-height:16.00px;color:#9d9d9d;transform:scaleX(0.9664);"><u>R</u>emove</span><div class="btn" style="left:228px;top:952px;width:98px;height:22px;background:#e1e1e1;border-color:#adadad;"></div><span class="t" style="left:249.80px;top:955.23px;font-size:12px;line-height:16.00px;color:#000;transform:scaleX(0.9692);">Section</span><div class="btn" style="left:228px;top:984px;width:98px;height:22px;background:#e1e1e1;border-color:#adadad;"></div><span class="t" style="left:249.80px;top:987.23px;font-size:12px;line-height:16.00px;color:#000;transform:scaleX(1.0224);">Printing</span><div class="b" style="left:333px;top:856px;width:428px;height:189px;background:#f9f9f9;border:1px solid #0078d7;"></div><div class="b" style="left:334px;top:857px;width:426px;height:37px;background:#e1e1e1;"></div><div class="b" style="left:334px;top:895px;width:48px;height:56px;background:#e1e1e1;"></div><div class="b" style="left:334px;top:914px;width:48px;height:18px;background:#aec8e8;"></div><div class="b" style="left:383px;top:914px;width:377px;height:18px;background:#c4dcf8;"></div><div class="b" style="left:334px;top:894px;width:426px;height:1px;background:#a0a0a0;"></div><div class="b" style="left:334px;top:913px;width:426px;height:1px;background:#a0a0a0;"></div><div class="b" style="left:334px;top:932px;width:426px;height:1px;background:#a0a0a0;"></div><div class="b" style="left:334px;top:951px;width:426px;height:1px;background:#a0a0a0;"></div><div class="b" style="left:382px;top:857px;width:1px;height:95px;background:#a0a0a0;"></div><div class="b" style="left:609px;top:857px;width:1px;height:95px;background:#a0a0a0;"></div><div class="b" style="left:685px;top:857px;width:1px;height:95px;background:#a0a0a0;"></div><div class="b" style="left:759px;top:857px;width:1px;height:95px;background:#a0a0a0;"></div><span class="t" style="left:336.40px;top:859.03px;font-size:12px;line-height:16.00px;color:#000;transform:scaleX(1.0190);">Number</span><span class="t" style="left:460.00px;top:859.03px;font-size:12px;line-height:16.00px;color:#000;transform:scaleX(1.0358);">Identification</span><span class="t" style="left:453.40px;top:878.03px;font-size:12px;line-height:16.00px;color:#000;transform:scaleX(0.9913);">of cross-section</span><span class="t" style="left:615.30px;top:859.03px;font-size:12px;line-height:16.00px;color:#000;transform:scaleX(0.9796);">Coordinates</span><span class="t" style="left:637.40px;top:878.03px;font-size:12px;line-height:16.00px;color:#000;transform:scaleX(1.0797);">[m]</span><span class="t" style="left:696.30px;top:859.03px;font-size:12px;line-height:16.00px;color:#000;transform:scaleX(0.9975);">Utilization</span><span class="t" style="left:713.50px;top:878.03px;font-size:12px;line-height:16.00px;color:#000;transform:scaleX(0.9513);">[%]</span><span class="t" style="left:355.30px;top:896.83px;font-size:12px;line-height:16.00px;color:#000;transform:scaleX(0.8972);">1</span><span class="t" style="left:385.60px;top:896.83px;font-size:12px;line-height:16.00px;color:#000;transform:scaleX(0.9393);">Řez A vlevo</span><span class="t" style="left:656.00px;top:896.83px;font-size:12px;line-height:16.00px;color:#000;transform:scaleX(0.8991);">0,000</span><span class="t" style="left:737.40px;top:896.83px;font-size:12px;line-height:16.00px;color:#000;transform:scaleX(0.8562);">59,3</span><span class="t" style="left:355.30px;top:915.83px;font-size:12px;line-height:16.00px;color:#000;transform:scaleX(0.8972);">2</span><span class="t" style="left:385.60px;top:915.83px;font-size:12px;line-height:16.00px;color:#000;transform:scaleX(1.0095);">Critical member cut "Member 1" - section</span><span class="t" style="left:656.00px;top:915.83px;font-size:12px;line-height:16.00px;color:#000;transform:scaleX(0.8991);">2,290</span><span class="t" style="left:737.40px;top:915.83px;font-size:12px;line-height:16.00px;color:#000;transform:scaleX(0.8562);">72,9</span><span class="t" style="left:355.30px;top:934.83px;font-size:12px;line-height:16.00px;color:#000;transform:scaleX(0.8972);">3</span><span class="t" style="left:385.60px;top:934.83px;font-size:12px;line-height:16.00px;color:#000;transform:scaleX(0.9121);">Řez B vpravo</span><span class="t" style="left:656.00px;top:934.83px;font-size:12px;line-height:16.00px;color:#000;transform:scaleX(0.8991);">4,580</span><span class="t" style="left:737.40px;top:934.83px;font-size:12px;line-height:16.00px;color:#000;transform:scaleX(0.8562);">62,9</span><div class="b" style="left:768px;top:856px;width:1143px;height:189px;background:#fff;border:1px solid #a0a0a0;"></div><div class="b" style="left:1893px;top:857px;width:17px;height:187px;background:#f0f0f0;"></div><div class="b" style="left:1895px;top:875px;width:11px;height:22px;background:#cdcdcd;"></div><span class="t" style="left:778.30px;top:862.63px;font-size:12px;line-height:16.00px;font-weight:bold;color:#000;transform:scaleX(0.9441);">Section analysis X=2,290m; 72,9%; Load: Load 1: Compression+bending.</span><span class="t" style="left:778.30px;top:882.13px;font-size:12px;line-height:16.00px;font-weight:bold;color:#000;transform:scaleX(0.9368);">Results for load:</span><span class="t" style="left:870.30px;top:882.13px;font-size:12px;line-height:16.00px;color:#000;transform:scaleX(0.9916);">Load 1: Compression+bending</span><span class="t" style="left:778.30px;top:898.23px;font-size:12px;line-height:16.00px;color:#000;transform:scaleX(0.9679);">Internal forces: N = -123,500 kN; M<sub class="s">y</sub> = 3,500 kNm; M<sub class="s">z</sub> = 0,000 kNm; V<sub class="s">z</sub> = 10,000 kN; V<sub class="s">y</sub> = 0,000 kN</span><span class="t" style="left:778.30px;top:915.83px;font-size:12px;line-height:16.00px;font-weight:bold;color:#000;transform:scaleX(0.9591);">Compression and bending moment combination check:</span><span class="t" style="left:781.30px;top:932.03px;font-size:12px;line-height:16.00px;color:#000;transform:scaleX(0.9539);">Resistances: N<sub class="s">R</sub> = 284,826 kN; M<sub class="s">y,R</sub> = -11,846 kNm</span><span class="t" style="left:796.00px;top:949.83px;font-size:12px;line-height:16.00px;color:#000;transform:scaleX(0.9550);">| -0,434 + -0,295 + 0,0 | = |-0,729 | &lt; 1</span><span class="t" style="left:993.20px;top:949.83px;font-size:12px;line-height:16.00px;color:#10a010;transform:scaleX(0.8618);">Pass</span><span class="t" style="left:778.30px;top:981.53px;font-size:12px;line-height:16.00px;font-weight:bold;color:#000;transform:scaleX(0.9574);">Shear forces check:</span><span class="t" style="left:781.30px;top:997.63px;font-size:12px;line-height:16.00px;color:#000;transform:scaleX(0.9234);">Resistance: V<sub class="s">R</sub> = 17,317 kN</span><span class="t" style="left:796.00px;top:1015.63px;font-size:12px;line-height:16.00px;color:#000;transform:scaleX(0.9228);">0,577 &lt; 1</span><span class="t" style="left:846.00px;top:1015.63px;font-size:12px;line-height:16.00px;color:#10a010;transform:scaleX(0.8543);">Pass</span><svg width="1920" height="1080" viewBox="0 0 1920 1080"><g transform="translate(246,784)"><rect x="0" y="0" width="14" height="14" rx="1.6" fill="#0a8282"/><rect x="1.2" y="1.2" width="11.6" height="2.7" fill="#fff"/><rect x="1.2" y="5.2" width="1.8" height="1.7" fill="#fff"/><rect x="1.2" y="8.2" width="1.8" height="1.7" fill="#fff"/><rect x="1.2" y="11.2" width="1.8" height="1.7" fill="#fff"/><rect x="4.2" y="5.2" width="1.8" height="1.7" fill="#fff"/><rect x="4.2" y="8.2" width="1.8" height="1.7" fill="#fff"/><rect x="4.2" y="11.2" width="1.8" height="1.7" fill="#fff"/><rect x="7.2" y="5.2" width="1.8" height="1.7" fill="#fff"/><rect x="7.2" y="8.2" width="1.8" height="1.7" fill="#fff"/><rect x="7.2" y="11.2" width="1.8" height="1.7" fill="#fff"/><rect x="10.1" y="5.2" width="2.7" height="1.7" fill="#fff"/><rect x="10.1" y="8.2" width="2.7" height="4.7" fill="#fff"/></g><path d="M1899.6,788.8 H1907.4 L1903.5,792.8Z" fill="#000"/><path d="M1896.4,869.4 L1900.5,865 L1904.6,869.4Z" fill="#505050"/><path d="M1896.4,1032.4 L1900.5,1036.8 L1904.6,1032.4Z" fill="#505050"/><path d="M233.2,866.6 H243.4 M238.3,861.6 V871.6" stroke="#0a960a" stroke-width="2.7"/><path d="M243.6,893.4 V900.2 H237" fill="none" stroke="#8c8c8c" stroke-width="2.4"/><path d="M232.8,900.2 L238.2,895.8 V904.6Z" fill="#8c8c8c"/><path d="M234.8,927.6 L242.8,935.4 M242.8,927.6 L234.8,935.4" stroke="#8c8c8c" stroke-width="2"/><rect x="234.5" y="956.5" width="9" height="13" rx="0.5" fill="#f5dc82" stroke="#8f7c3c" stroke-width="1"/><rect x="235.7" y="988.5" width="7.6" height="3.6" fill="#fff" stroke="#000" stroke-width="1.3"/><rect x="232.7" y="991.5" width="12.8" height="6.2" rx="1.6" fill="#c8ad7f" stroke="#000" stroke-width="1.3"/><rect x="235.5" y="995.9" width="8" height="5.5" rx="0.6" fill="#fff" stroke="#000" stroke-width="1.3"/><path d="M238,997.4 H241 M239.5,997.4 V999.8 M238,999.8 H241" stroke="#008c8c" stroke-width="0.9" fill="none"/><rect x="1909" y="1075" width="2" height="2" fill="#a0a0a0" shape-rendering="crispEdges"/><rect x="1912" y="1075" width="2" height="2" fill="#a0a0a0" shape-rendering="crispEdges"/><rect x="1915" y="1075" width="2" height="2" fill="#a0a0a0" shape-rendering="crispEdges"/><rect x="1912" y="1072" width="2" height="2" fill="#a0a0a0" shape-rendering="crispEdges"/><rect x="1915" y="1072" width="2" height="2" fill="#a0a0a0" shape-rendering="crispEdges"/><rect x="1915" y="1069" width="2" height="2" fill="#a0a0a0" shape-rendering="crispEdges"/></svg>
</div></body></html>
